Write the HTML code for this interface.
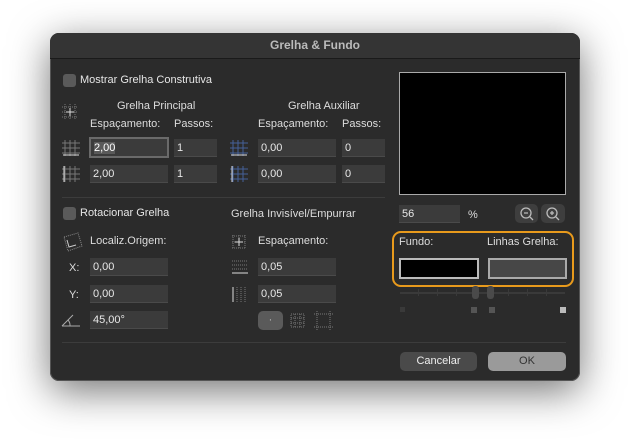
<!DOCTYPE html><html><head><style>
body{margin:0;width:630px;height:447px;background:#fff;position:relative;overflow:hidden;font-family:"Liberation Sans",sans-serif;font-size:11px;color:#ddd}
.a{position:absolute}
.dlg{left:50px;top:33px;width:530px;height:348px;background:#2b2b2b;border-radius:9px;box-shadow:0 10px 40px rgba(0,0,0,.55),0 0 0 1px #555 inset;overflow:hidden}
.tb{left:0;top:0;width:530px;height:25px;background:#343434;border-bottom:1px solid #1a1a1a;text-align:center;line-height:25px;font-weight:bold;color:#bbb;font-size:12px}
.f{position:absolute;height:18px;background:#3b3b3b;border-bottom:1px solid #4a4a4a;line-height:18px;padding-left:3px;box-sizing:border-box;color:#e8e8e8}
.cb{position:absolute;width:13px;height:13px;border-radius:3px;background:#5a5a5a}
.t{position:absolute;white-space:nowrap}
.sep{position:absolute;height:1px;background:#3c3c3c}
.btn{position:absolute;border-radius:5px;text-align:center;line-height:19px;height:19px}
.tick{position:absolute;top:289px;width:1px;height:7px;background:#3a3a3a}
</style></head><body>
<div class="a dlg">
<div class="a tb">Grelha &amp; Fundo</div>
</div>
<div class="cb" style="left:63px;top:74px"></div>
<div class="t" style="left:80px;top:74px;color:#e6e6e6">Mostrar Grelha Construtiva</div>
<svg class="a" style="left:61px;top:103px" width="18" height="18" stroke="#777" stroke-width="1" stroke-dasharray="1 1" fill="none"><path d="M1 4H17M1 9H17M1 14H17M4 1V17M9 1V17M14 1V17"/><path d="M9 5V13M5 9H13" stroke="#ddd" stroke-dasharray="none"/></svg>
<div class="t" style="left:117px;top:100px">Grelha Principal</div>
<div class="t" style="left:288px;top:100px">Grelha Auxiliar</div>
<div class="t" style="left:90px;top:118px">Espaçamento:</div>
<div class="t" style="left:174px;top:118px">Passos:</div>
<div class="t" style="left:258px;top:118px">Espaçamento:</div>
<div class="t" style="left:342px;top:118px">Passos:</div>
<svg class="a" style="left:61px;top:139px" width="20" height="18" stroke="#777" fill="none"><path d="M1 4H19M1 9H19M1 14H19M4 1V17M9 1V17M14 1V17"/><path d="M2 16H18" stroke="#ddd"/></svg>
<svg class="a" style="left:61px;top:165px" width="20" height="18" stroke="#777" fill="none"><path d="M1 4H19M1 9H19M1 14H19M4 1V17M9 1V17M14 1V17"/><path d="M3 1V17" stroke="#ddd"/></svg>
<svg class="a" style="left:229px;top:139px" width="20" height="18" stroke="#44609a" fill="none"><path d="M1 4H19M1 9H19M1 14H19M4 1V17M9 1V17M14 1V17"/><path d="M2 16H18" stroke="#ddd"/></svg>
<svg class="a" style="left:229px;top:165px" width="20" height="18" stroke="#44609a" fill="none"><path d="M1 4H19M1 9H19M1 14H19M4 1V17M9 1V17M14 1V17"/><path d="M3 1V17" stroke="#ddd"/></svg>
<div class="f" style="left:89px;top:137px;width:80px;height:21px;border:2px solid #6a6a6a;background:#3b3b3b"><span style="background:#5a5a5a;color:#fff">2,00</span></div>
<div class="f" style="left:174px;top:139px;width:43px">1</div>
<div class="f" style="left:258px;top:139px;width:78px">0,00</div>
<div class="f" style="left:342px;top:139px;width:43px">0</div>
<div class="f" style="left:90px;top:165px;width:78px">2,00</div>
<div class="f" style="left:174px;top:165px;width:43px">1</div>
<div class="f" style="left:258px;top:165px;width:78px">0,00</div>
<div class="f" style="left:342px;top:165px;width:43px">0</div>
<div class="sep" style="left:62px;top:197px;width:323px"></div>
<div class="cb" style="left:63px;top:207px"></div>
<div class="t" style="left:80px;top:207px;color:#e6e6e6">Rotacionar Grelha</div>
<div class="t" style="left:231px;top:208px">Grelha Invisível/Empurrar</div>
<svg class="a" style="left:61px;top:232px" width="22" height="20" stroke="#888" fill="none"><path d="M3 5L17 1L21 14L7 19Z" stroke-dasharray="1 1"/><path d="M6 8L8 15L15 13" stroke="#ccc"/></svg>
<div class="t" style="left:90px;top:235px">Localiz.Origem:</div>
<svg class="a" style="left:231px;top:234px" width="16" height="16" stroke="#777" stroke-dasharray="1 1" fill="none"><path d="M1 2H15M1 8H15M1 14H15M2 1V15M8 1V15M14 1V15"/><path d="M8 4V12M4 8H12" stroke="#ddd" stroke-dasharray="none"/></svg>
<div class="t" style="left:258px;top:235px">Espaçamento:</div>
<div class="t" style="left:69px;top:262px">X:</div>
<div class="f" style="left:90px;top:258px;width:78px">0,00</div>
<svg class="a" style="left:231px;top:259px" width="18" height="16" stroke="#777" stroke-dasharray="1 1" fill="none"><path d="M1 2H17M1 6H17M1 10H17"/><path d="M1 14H17" stroke="#ddd" stroke-dasharray="none"/></svg>
<div class="f" style="left:258px;top:258px;width:78px">0,05</div>
<div class="t" style="left:69px;top:289px">Y:</div>
<div class="f" style="left:90px;top:285px;width:78px">0,00</div>
<svg class="a" style="left:231px;top:285px" width="18" height="18" stroke="#777" stroke-dasharray="1 1" fill="none"><path d="M6 2V17M10 2V17M14 2V17"/><path d="M2 2V17" stroke="#ddd" stroke-dasharray="none"/></svg>
<div class="f" style="left:258px;top:285px;width:78px">0,05</div>
<svg class="a" style="left:61px;top:312px" width="20" height="16" stroke="#aaa" fill="none"><path d="M1 14H19M1 14L12 3M9 14A8 8 0 0 0 7 8"/></svg>
<div class="f" style="left:90px;top:311px;width:78px">45,00°</div>
<div class="btn" style="left:258px;top:311px;width:25px;background:#5a5a5a;color:#bbb">·</div>
<svg class="a" style="left:290px;top:313px" width="15" height="15" stroke="#777" stroke-dasharray="1 1" fill="none"><path d="M1 1H14V14H1ZM1 5H14M1 10H14M5 1V14M10 1V14"/></svg>
<svg class="a" style="left:314px;top:311px" width="19" height="19" stroke="#777" stroke-dasharray="1 1" fill="none"><path d="M3 0V19M16 0V19M0 3H19M0 16H19"/></svg>
<div class="a" style="left:399px;top:72px;width:165px;height:121px;background:#000;border:1px solid #aaa"></div>
<div class="f" style="left:399px;top:205px;width:61px">56</div>
<div class="t" style="left:468px;top:209px">%</div>
<div class="btn" style="left:515px;top:204px;width:23px;background:#3e3e3e;height:19px"></div>
<div class="btn" style="left:541px;top:204px;width:24px;background:#3e3e3e;height:19px"></div>
<svg class="a" style="left:519px;top:206px" width="16" height="16" stroke="#bbb" fill="none" stroke-width="1.3"><circle cx="7" cy="7" r="5"/><path d="M5 7H9M11 11L14 14"/></svg>
<svg class="a" style="left:545px;top:206px" width="16" height="16" stroke="#bbb" fill="none" stroke-width="1.3"><circle cx="7" cy="7" r="5"/><path d="M5 7H9M7 5V9M11 11L14 14"/></svg>
<div class="a" style="left:392px;top:231px;width:178px;height:52px;border:2px solid #e89a1c;border-radius:9px"></div>
<div class="t" style="left:399px;top:236px">Fundo:</div>
<div class="t" style="left:487px;top:236px">Linhas Grelha:</div>
<div class="a" style="left:399px;top:258px;width:76px;height:17px;background:#000;border:2px solid #bbb"></div>
<div class="a" style="left:488px;top:258px;width:75px;height:17px;background:#474747;border:2px solid #aaa"></div>
<div class="a" style="left:400px;top:292px;width:165px;height:2px;background:#3a3a3a"></div>
<div class="tick" style="left:418px"></div><div class="tick" style="left:437px"></div><div class="tick" style="left:456px"></div>
<div class="tick" style="left:508px"></div><div class="tick" style="left:527px"></div><div class="tick" style="left:546px"></div>
<div class="a" style="left:472px;top:286px;width:7px;height:13px;background:#4a4a4a;border-radius:3px"></div>
<div class="a" style="left:487px;top:286px;width:7px;height:13px;background:#4a4a4a;border-radius:3px"></div>
<div class="a" style="left:400px;top:307px;width:5px;height:5px;background:#3a3a3a"></div>
<div class="a" style="left:471px;top:307px;width:6px;height:6px;background:#555"></div>
<div class="a" style="left:489px;top:307px;width:6px;height:6px;background:#555"></div>
<div class="a" style="left:560px;top:307px;width:6px;height:6px;background:#bbb"></div>
<div class="sep" style="left:62px;top:342px;width:504px"></div>
<div class="btn" style="left:400px;top:352px;width:77px;background:#4a4a4a;color:#eee">Cancelar</div>
<div class="btn" style="left:488px;top:352px;width:78px;background:#9a9a9a;color:#333">OK</div>
</body></html>
